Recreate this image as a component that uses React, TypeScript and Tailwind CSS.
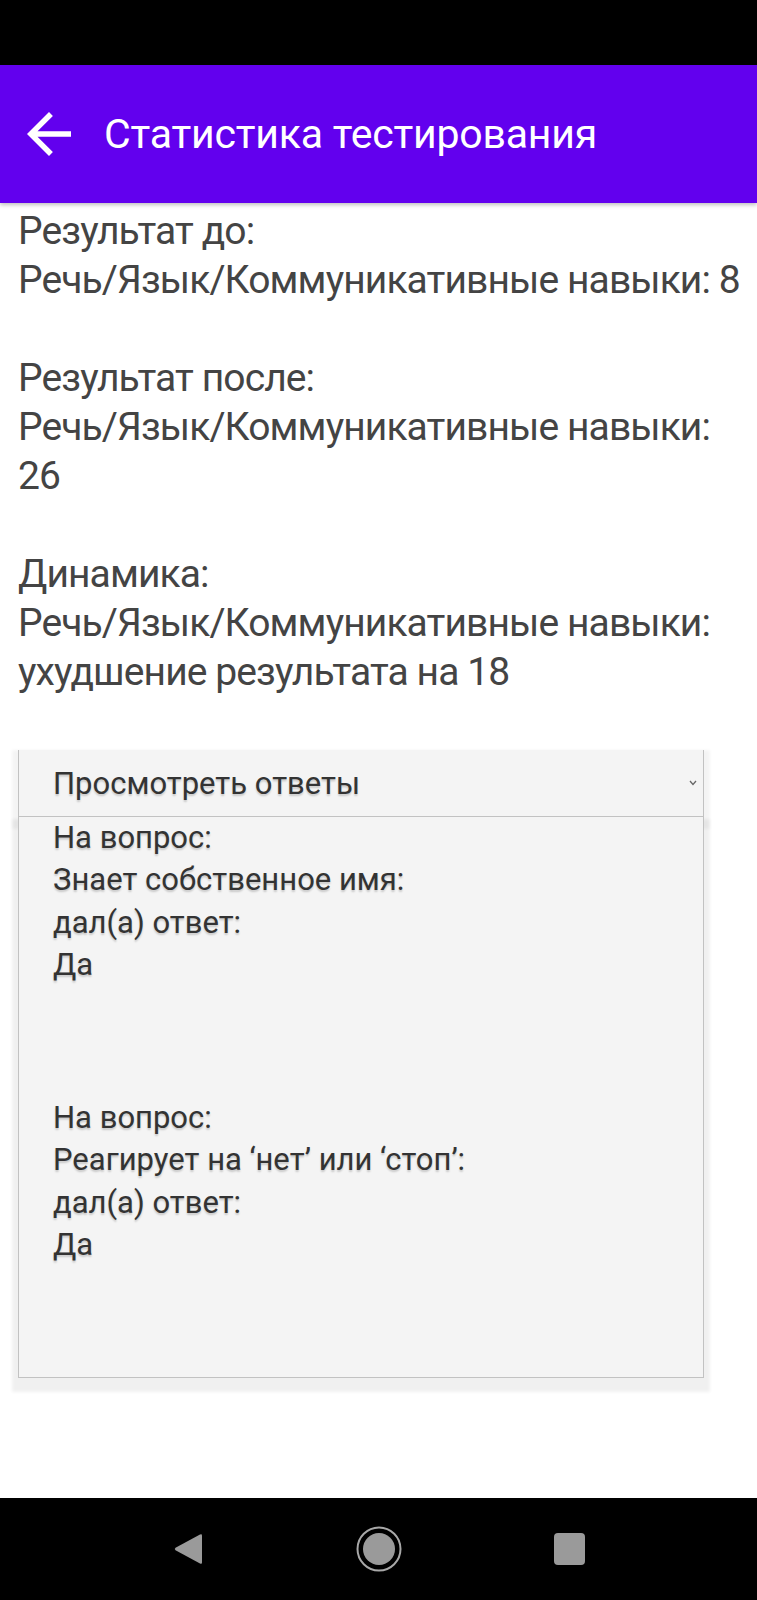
import React from "react";

/**
 * "Статистика тестирования" screen: purple app bar, plain result text,
 * and an expanded spinner-like panel listing the answers.
 */

const RESULT_BLOCKS: string[][] = [
  ["Результат до:", "Речь/Язык/Коммуникативные навыки: 8"],
  ["Результат после:", "Речь/Язык/Коммуникативные навыки:", "26"],
  ["Динамика:", "Речь/Язык/Коммуникативные навыки:", "ухудшение результата на 18"],
];

const ANSWERS = [
  { question: "Знает собственное имя:", answer: "Да" },
  { question: "Реагирует на ‘нет’ или ‘стоп’:", answer: "Да" },
];

function BackArrow() {
  return (
    <svg viewBox="0 0 24 24" className="h-[66px] w-[66px] shrink-0" fill="#ffffff">
      <path d="M20 11H7.83l5.59-5.59L12 4l-8 8 8 8 1.41-1.41L7.83 13H20v-2z" />
    </svg>
  );
}

function NavBar() {
  return (
    <div className="flex h-[102px] shrink-0 items-center justify-center gap-[152px] bg-black">
      <svg viewBox="0 0 31 32" className="h-[32px] w-[31px]">
        <path d="M29 2.5 L29 29.5 Q29 31.5 27 30.5 L2.5 17.2 Q1 16 2.5 14.8 L27 1.5 Q29 0.5 29 2.5 Z" fill="#9a9a9a" />
      </svg>
      <svg viewBox="0 0 46 46" className="h-[46px] w-[46px]">
        <circle cx="23" cy="23" r="21.5" fill="none" stroke="#a8a8a8" strokeWidth="2" />
        <circle cx="23" cy="23" r="16" fill="#9a9a9a" />
      </svg>
      <div className="h-[32px] w-[31px] rounded-[4px] bg-[#9a9a9a]" />
    </div>
  );
}

export default function App() {
  return (
    <div className="flex h-[1600px] w-[757px] flex-col bg-white font-['Roboto',sans-serif]">
      {/* status bar */}
      <div className="h-[65px] shrink-0 bg-black" />

      {/* app bar */}
      <header className="relative z-10 flex h-[138px] shrink-0 items-center bg-[#6200ee] pl-[16px] shadow-[0_2px_4px_rgba(0,0,0,0.25)]">
        <BackArrow />
        <h1 className="ml-[22px] text-[41px] leading-none font-normal tracking-[-0.2px] text-white">
          Статистика тестирования
        </h1>
      </header>

      <main className="flex-1">
        <div className="px-[18px] pt-[4px] text-[39px] leading-[49px] tracking-[-0.9px] text-[#444444]">
          {RESULT_BLOCKS.map((block, i) => (
            <div key={i} className={i > 0 ? "mt-[49px]" : ""}>
              {block.map((line) => (
                <p key={line} className="whitespace-nowrap">
                  {line}
                </p>
              ))}
            </div>
          ))}
        </div>

        {/* answers dropdown */}
        <div className="mt-[53px] ml-[18px] w-[686px]">
          <div className="flex h-[67px] items-center justify-between border-x border-b border-[#c2c2c2] bg-[#f4f4f4] pl-[34px] pr-[6px] shadow-[0_6px_3px_6px_rgba(0,0,0,0.045)]">
            <span className="text-[31px] leading-none text-[#333333] [text-shadow:0_2px_2px_rgba(0,0,0,0.18)]">
              Просмотреть ответы
            </span>
            <svg viewBox="0 0 8 6" className="h-[6px] w-[8px]">
              <polyline points="1,1 4,4.5 7,1" fill="none" stroke="#666666" strokeWidth="1.3" />
            </svg>
          </div>

          <div className="border-x border-b border-[#c2c2c2] bg-[#f4f4f4] pl-[34px] shadow-[0_8px_3px_6px_rgba(0,0,0,0.06)]">
            {ANSWERS.map((item) => (
              <div
                key={item.question}
                className="pb-[111px] text-[31px] leading-[42.3px] text-[#333333] [text-shadow:0_2px_2px_rgba(0,0,0,0.18)]"
              >
                <p>На вопрос:</p>
                <p>{item.question}</p>
                <p>дал(а) ответ:</p>
                <p>{item.answer}</p>
              </div>
            ))}
          </div>
        </div>
      </main>

      <NavBar />
    </div>
  );
}
